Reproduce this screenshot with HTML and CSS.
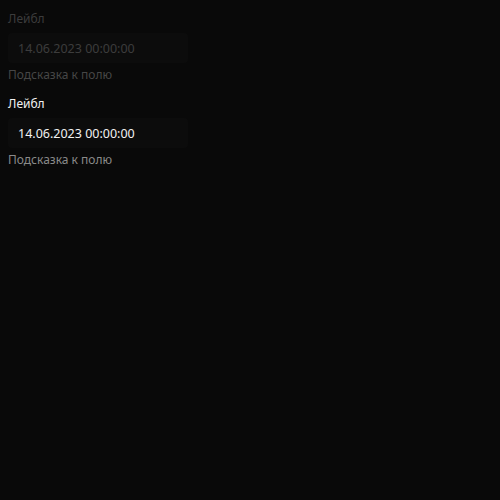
FILE: index.html
```html
<!DOCTYPE html>
<html lang="ru">
<head>
<meta charset="utf-8">
<link rel="stylesheet" href="styles.css">
</head>
<body>
<div class="form">
  <div class="field disabled">
    <div class="label">Лейбл</div>
    <div class="input"><span class="value">14.06.2023 00:00:00</span></div>
    <div class="hint">Подсказка к полю</div>
  </div>
  <div class="field">
    <div class="label">Лейбл</div>
    <div class="input"><span class="value">14.06.2023 00:00:00</span></div>
    <div class="hint">Подсказка к полю</div>
  </div>
</div>
</body>
</html>
```
FILE: styles.css
```css
html, body {
  margin: 0;
  padding: 0;
  background: #090909;
  width: 500px;
  height: 500px;
}
body {
  font-family: "Noto Sans", "Open Sans", sans-serif;
  font-size: 12px;
}
.form {
  display: flex;
  flex-direction: column;
  gap: 9px;
  padding: 9px 8px 8px;
}
.field {
  display: flex;
  flex-direction: column;
  width: 180px;
}
.label {
  line-height: 20px;
  color: #f2f2f2;
}
.input {
  margin-top: 4px;
  height: 30px;
  display: flex;
  align-items: center;
  padding: 0 10px;
  border-radius: 4px;
  background: #0c0c0c;
}
.value {
  font-size: 12.5px;
  color: #f2f2f2;
}
.hint {
  margin-top: 2px;
  line-height: 20px;
  color: #8a8a8a;
}
.disabled .label,
.disabled .value {
  color: #3c3c3c;
}
.disabled .hint {
  color: #464646;
}
```
